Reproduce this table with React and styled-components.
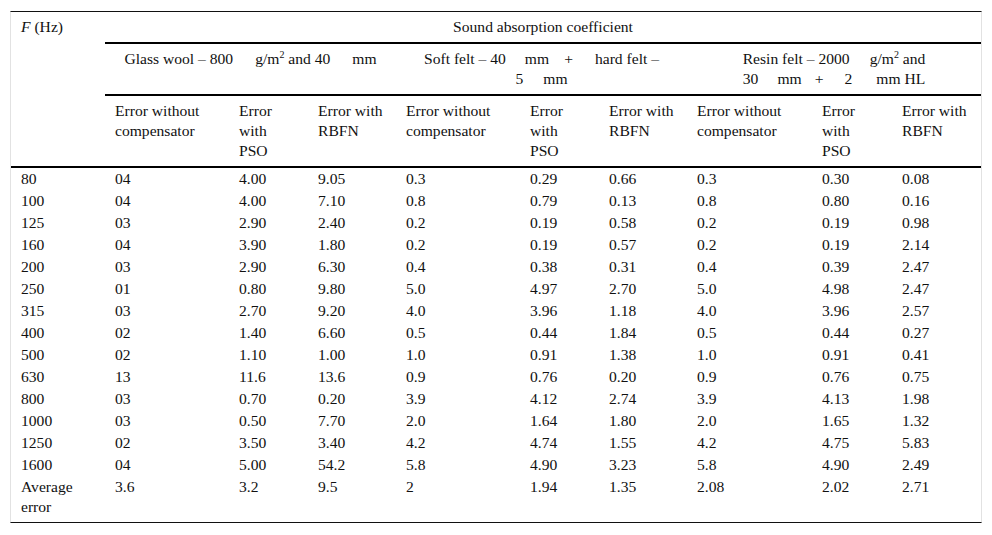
import React from 'react';
import styled, { createGlobalStyle } from 'styled-components';

const GlobalStyle = createGlobalStyle`
  html, body {
    margin: 0;
    padding: 0;
    background: #fff;
  }
  body {
    font-family: "Liberation Serif", "Times New Roman", serif;
    color: #111;
  }
`;

const Page = styled.div`
  padding: 11px 10px;
`;

const Frame = styled.div`
  box-sizing: border-box;
  width: 972px;
  border-top: 1px solid #111;
  border-bottom: 1px solid #111;
  border-left: 1px solid #e2e2e2;
  border-right: 1px solid #e2e2e2;
`;

const Table = styled.table`
  width: 970px;
  table-layout: fixed;
  border-collapse: collapse;
  font-size: 15.6px;
  line-height: 20px;
`;

const Head = styled.th`
  font-weight: normal;
  text-align: ${(p) => p.align || 'left'};
  vertical-align: top;
  padding: 5px 10px;
  border-bottom: 2px solid #000;
`;

const Cell = styled.td`
  text-align: left;
  vertical-align: top;
  padding: ${(p) => (p.last ? '1px 10px 5px' : '1px 10px')};
  white-space: ${(p) => (p.wrap ? 'normal' : 'nowrap')};
`;

const Gap = styled.span`
  display: inline-block;
  width: ${(p) => p.w}px;
`;

const Sup = styled.sup`
  font-size: 10px;
  line-height: 0;
  vertical-align: 6px;
`;

const widths = [94, 124, 79, 88, 124, 79, 88, 125, 80, 89];

const subHeads = ['Error without compensator', 'Error with PSO', 'Error with RBFN'];

const rows = [
  ['80', '04', '4.00', '9.05', '0.3', '0.29', '0.66', '0.3', '0.30', '0.08'],
  ['100', '04', '4.00', '7.10', '0.8', '0.79', '0.13', '0.8', '0.80', '0.16'],
  ['125', '03', '2.90', '2.40', '0.2', '0.19', '0.58', '0.2', '0.19', '0.98'],
  ['160', '04', '3.90', '1.80', '0.2', '0.19', '0.57', '0.2', '0.19', '2.14'],
  ['200', '03', '2.90', '6.30', '0.4', '0.38', '0.31', '0.4', '0.39', '2.47'],
  ['250', '01', '0.80', '9.80', '5.0', '4.97', '2.70', '5.0', '4.98', '2.47'],
  ['315', '03', '2.70', '9.20', '4.0', '3.96', '1.18', '4.0', '3.96', '2.57'],
  ['400', '02', '1.40', '6.60', '0.5', '0.44', '1.84', '0.5', '0.44', '0.27'],
  ['500', '02', '1.10', '1.00', '1.0', '0.91', '1.38', '1.0', '0.91', '0.41'],
  ['630', '13', '11.6', '13.6', '0.9', '0.76', '0.20', '0.9', '0.76', '0.75'],
  ['800', '03', '0.70', '0.20', '3.9', '4.12', '2.74', '3.9', '4.13', '1.98'],
  ['1000', '03', '0.50', '7.70', '2.0', '1.64', '1.80', '2.0', '1.65', '1.32'],
  ['1250', '02', '3.50', '3.40', '4.2', '4.74', '1.55', '4.2', '4.75', '5.83'],
  ['1600', '04', '5.00', '54.2', '5.8', '4.90', '3.23', '5.8', '4.90', '2.49'],
  ['Average error', '3.6', '3.2', '9.5', '2', '1.94', '1.35', '2.08', '2.02', '2.71'],
];

export default function App() {
  return (
    <Page>
      <GlobalStyle />
      <Frame>
        <Table>
          <colgroup>
            {widths.map((w, i) => (
              <col key={i} style={{ width: w }} />
            ))}
          </colgroup>
          <thead>
            <tr>
              <Head rowSpan={3}>
                <i>F</i> (Hz)
              </Head>
              <Head colSpan={9} align="center">
                Sound absorption coefficient
              </Head>
            </tr>
            <tr>
              <Head colSpan={3} align="center">
                Glass wool – 800<Gap w={22} />g/m<Sup>2</Sup> and 40<Gap w={22} />mm
              </Head>
              <Head colSpan={3} align="center">
                Soft felt – 40<Gap w={19} />mm<Gap w={15} />+<Gap w={22} />hard felt –
                <br />
                5<Gap w={20} />mm
              </Head>
              <Head colSpan={3} align="center">
                Resin felt – 2000<Gap w={20} />g/m<Sup>2</Sup> and
                <br />
                30<Gap w={19} />mm<Gap w={13} />+<Gap w={21} />2<Gap w={24} />mm HL
              </Head>
            </tr>
            <tr>
              {[0, 1, 2].map((g) =>
                subHeads.map((label) => <Head key={`${g}-${label}`}>{label}</Head>)
              )}
            </tr>
          </thead>
          <tbody>
            {rows.map((row, r) => (
              <tr key={r}>
                {row.map((v, c) => (
                  <Cell key={c} wrap={c === 0 ? 1 : 0} last={r === rows.length - 1 ? 1 : 0}>
                    {v}
                  </Cell>
                ))}
              </tr>
            ))}
          </tbody>
        </Table>
      </Frame>
    </Page>
  );
}
